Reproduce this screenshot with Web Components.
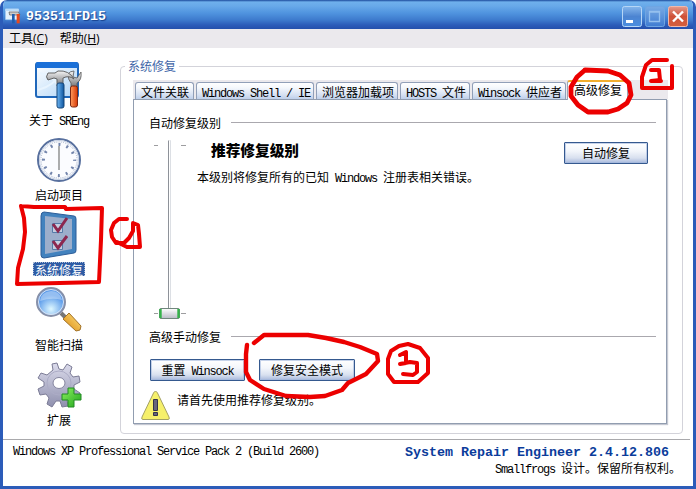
<!DOCTYPE html>
<html lang="zh-CN">
<head>
<meta charset="utf-8">
<title>System Repair Engineer</title>
<style>
    html, body {
        margin: 0;
        width: 696px;
        height: 489px;
        overflow: hidden;
        background: #fff;
        font-family: "Noto Sans CJK SC", sans-serif;
        font-size: 12px;
        line-height: 14px;
        color: #000;
    }
</style>
</head>
<body>
<repair-app></repair-app>

<script>
class BaseElement extends HTMLElement {
    constructor() {
        super();
        this.shadowDOM = this.attachShadow({ mode: "open" });
    }

    connectedCallback() {
        this.render();
    }
}

// Half width latin next to full width hanzi: 6px and 12px cells.
class CellText extends BaseElement {
    render() {
        const text = (this.getAttribute("text") || "").replace(/[ -~]+/g, "<span>$&</span>");
        this.shadowDOM.innerHTML = `
            <style>
                :host {
                    display: block;
                    height: 14px;
                    line-height: 16px;
                }

                div {
                    white-space: pre;
                }

                span {
                    font-family: "Liberation Mono", monospace;
                    font-size: 12px;
                    letter-spacing: -1.2px;
                    line-height: 0;
                }
            </style>
            <div>${text}</div>`;
    }
}

class TitleBar extends BaseElement {
    render() {
        this.shadowDOM.innerHTML = `
            <style>
                :host {
                    display: flex;
                    align-items: center;
                    box-sizing: border-box;
                    height: 29px;
                    padding: 3px 5px 0 2px;
                    background: linear-gradient(#1c4a9c 0, #6fb0ec 2px, #68a9e9 6px, #5094df 13px, #3d7acd 20px, #2c5cb9 25px, #2450ac 29px);
                }

                .title {
                    flex: 1;
                    margin: 2px 0 0 5px;
                    color: #fff;
                    font: bold 13.33px/16px "Liberation Mono", monospace;
                    text-shadow: 1px 1px 1px #17408e;
                }

                .buttons {
                    display: flex;
                    gap: 3px;
                }

                .buttons svg {
                    display: block;
                }
            </style>

            <svg width="16" height="16" viewBox="0 0 48 48">
                <rect x="1" y="3" width="40" height="32" rx="2" fill="#e4f1fc" stroke="#8fc0ef" stroke-width="2"/>
                <rect x="1" y="2" width="40" height="7" fill="#bcdcf8"/>
                <path d="M12 12h28l5 9H14z" fill="#ccc" stroke="#555" stroke-width="2"/>
                <rect x="21" y="18" width="8" height="28" fill="#1e5fb0"/>
                <rect x="35" y="18" width="9" height="28" fill="#e8481c"/>
            </svg>
            <span class="title">${this.getAttribute("text")}</span>
            <div class="buttons">
                <svg width="20" height="21" viewBox="0 0 20 21">
                    <defs><linearGradient id="b" x2="0" y2="1"><stop stop-color="#86b7ec"/><stop offset=".5" stop-color="#4c84d1"/><stop offset="1" stop-color="#4b8ee0"/></linearGradient></defs>
                    <rect x=".5" y=".5" width="19" height="20" rx="2" fill="url(#b)" stroke="#b6d6f6"/>
                    <rect x="4" y="14" width="7" height="3" fill="#fff"/>
                </svg>
                <svg width="20" height="21" viewBox="0 0 20 21">
                    <defs><linearGradient id="m" x2="0" y2="1"><stop stop-color="#78aae4"/><stop offset="1" stop-color="#3f7cd2"/></linearGradient></defs>
                    <rect x=".5" y=".5" width="19" height="20" rx="2" fill="url(#m)" stroke="#6fa5e2"/>
                    <path d="M4.500 5.500h10v10h-10zM4 6h11" fill="none" stroke="#95c0ee" stroke-width="1.300"/>
                </svg>
                <svg width="20" height="21" viewBox="0 0 20 21">
                    <defs><linearGradient id="r" x2="0" y2="1"><stop stop-color="#e49a8b"/><stop offset=".5" stop-color="#cf5138"/><stop offset="1" stop-color="#d4603e"/></linearGradient></defs>
                    <rect x=".5" y=".5" width="19" height="20" rx="2" fill="url(#r)" stroke="#f1b9ab"/>
                    <path d="M5 5.500l10 10M15 5.500l-10 10" stroke="#fff" stroke-width="2.400"/>
                </svg>
            </div>`;
    }
}

class MenuBar extends BaseElement {
    render() {
        this.shadowDOM.innerHTML = `
            <style>
                :host {
                    display: flex;
                    gap: 12px;
                    height: 19px;
                    padding-left: 6px;
                    background: #ebe9ed;
                    line-height: 17px;
                }

                span {
                    font-family: "Open Sans", sans-serif;
                    font-size: 12px;
                    line-height: 0;
                }
            </style>
            <div>工具<span>(<u>C</u>)</span></div>
            <div>帮助<span>(<u>H</u>)</span></div>`;
    }
}

class SideItem extends BaseElement {
    render() {
        this.shadowDOM.innerHTML = `
            <style>
                :host {
                    display: flex;
                    flex-direction: column;
                    align-items: center;
                    height: 75px;
                }

                ::slotted(svg) {
                    display: block;
                    width: 48px;
                    height: 48px;
                }

                .label {
                    margin-top: 3px;
                    padding: 0 2px;
                    height: 14px;
                }

                :host([selected]) .label {
                    color: #fff;
                    background: #2f5ca5;
                    outline: 1px dotted #a9b9d5;
                    outline-offset: -1px;
                }
            </style>
            <slot></slot>
            <div class="label"><cell-text text="${this.getAttribute("label")}"></cell-text></div>`;
    }
}

class GroupFrame extends BaseElement {
    render() {
        this.shadowDOM.innerHTML = `
            <style>
                :host {
                    display: block;
                }

                fieldset {
                    box-sizing: border-box;
                    width: 563px;
                    height: 375px;
                    margin: 0;
                    padding: 7px 0 0 12px;
                    border: 1px solid #d3d3da;
                    border-radius: 4px;
                    min-width: 0;
                }

                legend {
                    margin-left: -8px;
                    padding: 0 3px;
                    height: 14px;
                    color: #3f66a8;
                }
            </style>
            <fieldset>
                <legend>${this.getAttribute("label")}</legend>
                <slot></slot>
            </fieldset>`;
    }
}

class TabItem extends BaseElement {
    render() {
        this.shadowDOM.innerHTML = `
            <style>
                :host {
                    display: block;
                    box-sizing: border-box;
                    height: 17px;
                    padding: 1px 0 0 5px;
                    border: 1px solid #919fb8;
                    border-bottom: 0;
                    border-radius: 3px 3px 0 0;
                    background: linear-gradient(#fff 0, #f4f7fc 5px, #d5e0f2 12px, #b9cbe8 17px);
                }

                :host([active]) {
                    height: 20px;
                    padding: 0 0 0 6px;
                    margin: 0 0 -1px -1px;
                    border-color: #9ba6b8;
                    border-top: 2px solid #f2ae2e;
                    background: #fff;
                    position: relative;
                }
            </style>
            <cell-text text="${this.getAttribute("label")}"></cell-text>`;
    }
}

class TabStrip extends BaseElement {
    render() {
        this.shadowDOM.innerHTML = `
            <style>
                :host {
                    display: flex;
                    align-items: flex-end;
                    gap: 2px;
                    height: 19px;
                    width: 535px;
                    padding-left: 2px;
                    box-sizing: border-box;
                    background: #ebe9ed;
                }
            </style>
            <slot></slot>`;
    }
}

class TabPanel extends BaseElement {
    render() {
        this.shadowDOM.innerHTML = `
            <style>
                :host {
                    display: block;
                    box-sizing: border-box;
                    width: 534px;
                    height: 325px;
                    padding: 15px 10px 0 15px;
                    border: 1px solid #919db0;
                    box-shadow: 1px 1px 1px #c5c8d2;
                    background: #fff;
                }
            </style>
            <slot></slot>`;
    }
}

class SectionRule extends BaseElement {
    render() {
        this.shadowDOM.innerHTML = `
            <style>
                :host {
                    display: flex;
                    align-items: center;
                    height: 14px;
                }

                cell-text {
                    width: 82px;
                }

                i {
                    flex: 1;
                    height: 1px;
                    background: #aaa8ae;
                }
            </style>
            <cell-text text="${this.getAttribute("label")}"></cell-text><i></i>`;
    }
}

class PushButton extends BaseElement {
    render() {
        this.shadowDOM.innerHTML = `
            <style>
                :host {
                    display: flex;
                    box-sizing: border-box;
                    justify-content: center;
                    height: 22px;
                    padding-top: 2px;
                    border: 1px solid #35598f;
                    border-radius: 1px;
                    background: linear-gradient(#fff, #f3f6fb 40%, #d8e0ef 75%, #a8b9dc);
                    box-shadow: inset 0 0 0 1px rgba(160, 182, 220, 0.6);
                }
            </style>
            <cell-text text="${this.getAttribute("label")}"></cell-text>`;
    }
}

class LevelSlider extends BaseElement {
    render() {
        this.shadowDOM.innerHTML = `
            <style>
                :host {
                    display: block;
                    width: 34px;
                    height: 184px;
                }
            </style>
            <svg width="34" height="184" viewBox="0 0 34 184">
                <path d="M1 6.500h4M28 6.500h5M1 174.500h4M28 174.500h5" stroke="#9d9da0"/>
                <path d="M15.500 1.500v169" stroke="#8e9299"/>
                <path d="M16.500 1.500h1v169" fill="none" stroke="#dcdfe4"/>
                <defs><linearGradient id="g" x2="0" y2="1"><stop stop-color="#fff"/><stop offset="1" stop-color="#b9bbc6"/></linearGradient></defs>
                <rect x="6.500" y="169.500" width="20" height="10" rx="1.500" fill="url(#g)" stroke="#70877c"/>
                <path d="M7.500 170v9M25.500 170v9" stroke="#35b34a" stroke-width="2.400"/>
            </svg>`;
    }
}

class StatusBar extends BaseElement {
    render() {
        this.shadowDOM.innerHTML = `
            <style>
                :host {
                    display: flex;
                    justify-content: space-between;
                    height: 46px;
                    margin-right: 3px;
                    padding: 4px 10px 0 10px;
                    border-top: 1px solid #a9a9ac;
                    box-sizing: border-box;
                }

                cell-text {
                    margin-top: -2px;
                }

                .right {
                    display: flex;
                    flex-direction: column;
                    align-items: flex-end;
                }

                .right cell-text {
                    margin: -1px -1px 0 0;
                }

                b {
                    margin-right: 11px;
                    color: #0b3c9b;
                    font: bold 13.33px/17px "Liberation Mono", monospace;
                    white-space: pre;
                }
            </style>
            <cell-text text="Windows XP Professional Service Pack 2 (Build 2600)"></cell-text>
            <div class="right">
                <b>System Repair Engineer 2.4.12.806</b>
                <cell-text text="Smallfrogs 设计。保留所有权利。"></cell-text>
            </div>`;
    }
}

// Freehand red marker strokes lying over the window.
class MarkerLayer extends BaseElement {
    render() {
        this.shadowDOM.innerHTML = `
            <style>
                :host {
                    position: absolute;
                    left: 0;
                    top: 0;
                    pointer-events: none;
                }
            </style>
            <svg width="696" height="489" viewBox="0 0 696 489" fill="none" stroke="#ec0000" stroke-width="4" stroke-linecap="round" stroke-linejoin="round">
                <path d="M21 206L34 207 65 207 66 209 102 208L101 240 99 282 60 283 17 284L18 268 23 249 25 232 24 218 21 206"/>
                <path d="M127 219L119 219 114 223 111 230 112 237 116 243 124 243 129 238 133 231 133 223 138 225 139 234 140 247 127 247 117 242"/>
                <path stroke-width="4.800" d="M585 70L577 77 571 87 571 96 578 105 588 112 608 112 618 109 627 103 631 95 629 83 620 75 608 71 585 70"/>
                <path d="M667 60L652 60 646 65 642 77 642 88 672 88 672 66M651 70L659 70 660 80 651 81 661 81"/>
                <path stroke-width="4.400" d="M254 343L264 335 290 335 308 335 326 338 344 342 360 347 377 354 378 361 366 374 348 383 342 390 325 396 310 397 286 396 264 389 250 380 246 372 246 354 247 345"/>
                <path d="M408 344L399 346 391 351 388 359 388 374 394 382 418 382 428 373 428 358 420 348 408 344M400 355L406 352 406 363 400 364 410 362 417 363 417 372 413 375 403 374"/>
            </svg>`;
    }
}

class RepairApp extends BaseElement {
    render() {
        this.shadowDOM.innerHTML = `
            <style>
                :host {
                    display: block;
                    position: relative;
                    width: 696px;
                    height: 489px;
                }

                .window {
                    box-sizing: border-box;
                    width: 696px;
                    height: 489px;
                    overflow: hidden;
                    border-radius: 7px 7px 0 0;
                    border: solid #2c5cb9;
                    border-width: 0 3px 3px;
                    background: #fff;
                }

                .client {
                    display: flex;
                    height: 391px;
                }

                nav {
                    width: 112px;
                    padding-top: 13px;
                }

                group-frame {
                    margin: 11px 0 0 5px;
                }

                .row {
                    display: flex;
                    align-items: flex-start;
                }

                .auto {
                    height: 200px;
                    padding: 10px 8px 0 4px;
                    box-sizing: border-box;
                }

                .level {
                    flex: 1;
                    padding: 2px 0 0 10px;
                }

                h1 {
                    margin: 0 0 11px 14px;
                    font-size: 14.67px;
                    line-height: 17px;
                    font-weight: 900;
                }

                .manual {
                    gap: 14px;
                    padding: 16px 0 0 1px;
                }

                .hint {
                    gap: 7px;
                    margin: 9px 0 0 -8px;
                }

                .hint cell-text {
                    margin-top: 2px;
                }
            </style>

            <div class="window">
                <title-bar text="953511FD15"></title-bar>
                <menu-bar></menu-bar>
                <div class="client">
                    <nav>
                        <side-item label="关于 SREng">
                            <svg viewBox="0 0 48 48">
                                <defs>
                                    <linearGradient id="pane" x2="1" y2="1"><stop stop-color="#fff"/><stop offset="1" stop-color="#aed4f7"/></linearGradient>
                                    <linearGradient id="steel" x2="0" y2="1"><stop stop-color="#f6f6f6"/><stop offset="1" stop-color="#6b6c70"/></linearGradient>
                                    <linearGradient id="blue"><stop stop-color="#6db5f2"/><stop offset="1" stop-color="#0e559f"/></linearGradient>
                                    <linearGradient id="red"><stop stop-color="#ff9b5c"/><stop offset="1" stop-color="#d73806"/></linearGradient>
                                </defs>
                                <rect x="1" y="2" width="42" height="34" rx="2" fill="url(#pane)" stroke="#1f67ba" stroke-width="2"/>
                                <path d="M1 7V3q0-2 2-2h38q2 0 2 2v4z" fill="#1a70d8"/>
                                <path d="M3 29q16-4 24-18M5 12q18 4 20 20" stroke="#e8f4fe" stroke-width="2" fill="none"/>
                                <path d="M33 13q0 6 3 9v5h6v-5q5-3 4-11l-4 6-4-1 1-6q-4 0-6 3z" fill="url(#steel)" stroke="#555" stroke-width=".8"/>
                                <rect x="35.500" y="25" width="7" height="21" rx="2" fill="url(#red)" stroke="#7d2710"/>
                                <path d="M13 12h7l3-2q11-1 16 8-5-4-11-1v8h-6v-7l-3-1-6 2q-3-3 0-7z" fill="url(#steel)" stroke="#555" stroke-width=".9"/>
                                <rect x="22" y="22" width="7" height="25" rx="2" fill="url(#blue)" stroke="#174679"/>
                            </svg>
                        </side-item>
                        <side-item label="启动项目">
                            <svg viewBox="0 0 48 48">
                                <circle cx="24" cy="24" r="21" fill="#fbfcff" stroke="#58709e" stroke-width="2"/>
                                <circle cx="24" cy="24" r="19.500" fill="none" stroke="#c5d0e3"/>
                                <circle cx="24" cy="24" r="15.500" fill="none" stroke="#7385ac" stroke-width="3" stroke-dasharray="2 6.115" stroke-dashoffset="1"/>
                                <circle cx="24" cy="24" r="18" fill="none" stroke="#7e8eaf" stroke-width=".8" stroke-dasharray=".7 1.185"/>
                                <path d="M24 10v24" stroke="#777" stroke-width="1.200"/>
                            </svg>
                        </side-item>
                        <side-item label="系统修复" selected>
                            <svg viewBox="0 0 48 48">
                                <path d="M9 1L39 5q2 0 2 3v31q0 3-2 3L9 47q-3 0-3-3V5q0-4 3-4z" fill="#4282be" stroke="#2c5d98"/>
                                <path d="M10 5L37 8v30L10 43z" fill="#9caecb"/>
                                <path d="M17.500 12.500h10v9h-10zM17.500 29.500h10v9h-10z" fill="#c5cee0" stroke="#557ba8"/>
                                <path d="M18 13l5 7 9-13M18 30l5 7 9-12" fill="none" stroke="#8c274f" stroke-width="3"/>
                            </svg>
                        </side-item>
                        <side-item label="智能扫描">
                            <svg viewBox="0 0 48 48">
                                <defs>
                                    <radialGradient id="lens" cy=".75"><stop stop-color="#dff8ff"/><stop offset="1" stop-color="#5b9bea"/></radialGradient>
                                    <linearGradient id="gold" x1="1" y1="0" x2="0" y2="1"><stop stop-color="#ffe485"/><stop offset="1" stop-color="#d98508"/></linearGradient>
                                </defs>
                                <path d="M26 27l6 6" stroke="#777" stroke-width="4"/>
                                <path d="M28 33l6-6 12 13-1 4-4 1z" fill="url(#gold)" stroke="#a27228"/>
                                <circle cx="16" cy="16" r="14" fill="url(#lens)" stroke="#8790a8" stroke-width="2"/>
                                <circle cx="16" cy="16" r="12.500" fill="none" stroke="#d9e3f4"/>
                                <path d="M5 15q1-9 11-10 9 0 11 9-10-3-22 1z" fill="#fff" opacity=".35"/>
                            </svg>
                        </side-item>
                        <side-item label="扩展">
                            <svg viewBox="0 0 48 48">
                                <defs>
                                    <linearGradient id="gear" x2="0" y2="1"><stop stop-color="#dcdcec"/><stop offset="1" stop-color="#8f90ae"/></linearGradient>
                                    <linearGradient id="green" x2="1" y2="1"><stop stop-color="#8cf060"/><stop offset="1" stop-color="#20a51c"/></linearGradient>
                                </defs>
                                <path d="M18 9L17 3l5-1 2 6 4 1 4-6 5 3-2 6 3 4 6-1 1 6-6 3v4l6 4-3 5-6-2-4 4 1 6-6 1-2-6h-4l-4 6-5-3 2-6-3-4-6 1-2-6 6-3v-4l-6-4 3-5 6 2z" fill="url(#gear)" stroke="#7c7c96"/>
                                <circle cx="24" cy="22" r="12" fill="none" stroke="#acacc6"/>
                                <ellipse cx="24" cy="22" rx="6" ry="5.500" fill="#fff" stroke="#85859f"/>
                                <path d="M33 27h6v6h7v6h-7v7h-6v-7h-6v-6h6z" fill="url(#green)" stroke="#228a24"/>
                            </svg>
                        </side-item>
                    </nav>
                    <group-frame label="系统修复">
                        <tab-strip>
                            <tab-item label="文件关联" style="width:59px"></tab-item>
                            <tab-item label="Windows Shell / IE" style="width:118px"></tab-item>
                            <tab-item label="浏览器加载项" style="width:82px"></tab-item>
                            <tab-item label="HOSTS 文件" style="width:70px"></tab-item>
                            <tab-item label="Winsock 供应者" style="width:94px"></tab-item>
                            <tab-item label="高级修复" style="width:61px" active></tab-item>
                        </tab-strip>
                        <tab-panel>
                            <section-rule label="自动修复级别"></section-rule>
                            <div class="row auto">
                                <level-slider></level-slider>
                                <div class="level">
                                    <h1>推荐修复级别</h1>
                                    <cell-text text="本级别将修复所有的已知 Windows 注册表相关错误。"></cell-text>
                                </div>
                                <push-button label="自动修复" style="width:84px;margin-top:3px"></push-button>
                            </div>
                            <section-rule label="高级手动修复"></section-rule>
                            <div class="row manual">
                                <push-button label="重置 Winsock" style="width:95px"></push-button>
                                <push-button label="修复安全模式" style="width:96px"></push-button>
                            </div>
                            <div class="row hint">
                                <svg width="29" height="31" viewBox="0 0 29 31">
                                    <path d="M14.500 1.500Q15.500 1 16.500 3L28 27q1 2.500-1 2.500H2Q0 29.500 1 27L12.500 3q1-2 2-1.500z" fill="#f6f06a" stroke="#a4a163"/>
                                    <path d="M12.500 9.500h4v11h-4zM12.500 22.500h4v3h-4z" fill="#66647c" stroke="#34334a"/>
                                </svg>
                                <cell-text text="请首先使用推荐修复级别。"></cell-text>
                            </div>
                        </tab-panel>
                    </group-frame>
                </div>
                <status-bar></status-bar>
            </div>
            <marker-layer></marker-layer>`;
    }
}

customElements.define("cell-text", CellText);
customElements.define("title-bar", TitleBar);
customElements.define("menu-bar", MenuBar);
customElements.define("side-item", SideItem);
customElements.define("group-frame", GroupFrame);
customElements.define("tab-item", TabItem);
customElements.define("tab-strip", TabStrip);
customElements.define("tab-panel", TabPanel);
customElements.define("section-rule", SectionRule);
customElements.define("push-button", PushButton);
customElements.define("level-slider", LevelSlider);
customElements.define("status-bar", StatusBar);
customElements.define("marker-layer", MarkerLayer);
customElements.define("repair-app", RepairApp);
</script>
</body>
</html>
